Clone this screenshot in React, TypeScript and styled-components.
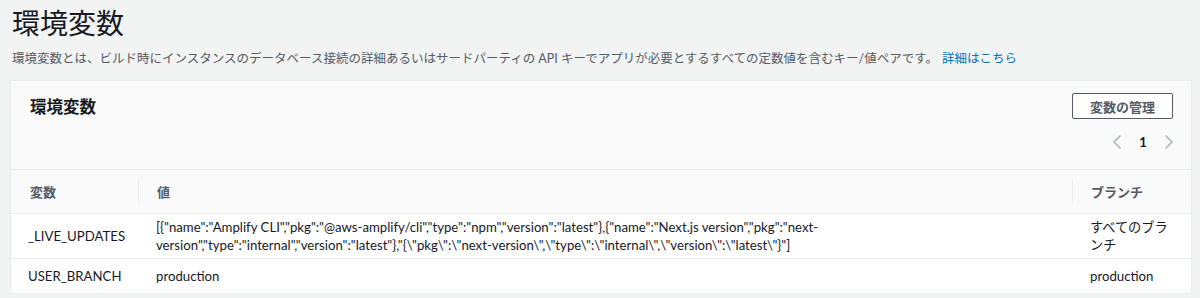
import React from "react";
import styled, { createGlobalStyle } from "styled-components";

const Global = createGlobalStyle`
  html, body { margin: 0; padding: 0; background: #f2f3f3; }
  body {
    font-family: "Lato", "Noto Sans CJK JP", sans-serif;
    color: #16191f;
    -webkit-font-smoothing: antialiased;
  }
`;

const Page = styled.div`
  padding: 5px 9px 0 11px;
`;

const Title = styled.h1`
  margin: 0 0 0 1px;
  font-size: 28px;
  font-weight: 400;
  line-height: 34px;
  color: #16191f;
  font-family: "Noto Sans CJK JP", sans-serif;
`;

const Description = styled.p`
  margin: 11px 0 0 1px;
  font-size: 12.5px;
  line-height: 18px;
  color: #545b64;
  font-family: "Lato", "Noto Sans CJK JP", sans-serif;
`;

const Link = styled.a`
  color: #0073bb;
  text-decoration: none;
  margin-left: 4px;
`;

const Card = styled.section`
  margin-top: 13px;
  background: #fafafa;
  box-shadow: 0 0 0 1px #eaeded, 0 1px 1px rgba(0, 28, 36, 0.15);
`;

const CardHeader = styled.div`
  display: flex;
  justify-content: space-between;
  align-items: flex-start;
  padding: 12px 18px 0 19px;
  height: 76px;
  border-bottom: 1px solid #eaeded;
`;

const CardTitle = styled.h2`
  margin: 1px 0 0 0;
  font-size: 16.5px;
  font-weight: 700;
  line-height: 24px;
  font-family: "Noto Sans CJK JP", sans-serif;
  color: #16191f;
`;

const Actions = styled.div`
  display: flex;
  flex-direction: column;
  align-items: flex-end;
`;

const Button = styled.button`
  width: 101px;
  height: 26px;
  border: 1px solid #545b64;
  border-radius: 2px;
  background: #fff;
  color: #545b64;
  font-family: "Noto Sans CJK JP", sans-serif;
  font-weight: 700;
  font-size: 13px;
  padding: 0;
  cursor: pointer;
`;

const Pager = styled.div`
  display: flex;
  align-items: center;
  gap: 13px;
  margin-top: 15px;
  margin-right: -3px;
`;

const PageNum = styled.span`
  font-size: 13px;
  font-weight: 700;
  color: #16191f;
  width: 12px;
  text-align: center;
`;

const Chevron = ({ dir }: { dir: "left" | "right" }) => (
  <svg width="14" height="16" viewBox="0 0 14 16" fill="none">
    <path
      d={dir === "left" ? "M10 2 L4 8 L10 14" : "M4 2 L10 8 L4 14"}
      stroke="#aab7b8"
      strokeWidth="1.6"
      strokeLinecap="round"
      strokeLinejoin="round"
    />
  </svg>
);

const Table = styled.table`
  width: 100%;
  border-collapse: collapse;
  table-layout: fixed;
`;

const Th = styled.th<{ $sep?: boolean }>`
  position: relative;
  height: 43px;
  padding: 0 0 0 19px;
  text-align: left;
  font-size: 13px;
  font-weight: 700;
  color: #545b64;
  font-family: "Noto Sans CJK JP", sans-serif;
  border-bottom: 1px solid #eaeded;
  &::before {
    content: "";
    display: ${(p) => (p.$sep ? "block" : "none")};
    position: absolute;
    left: 0;
    top: 10px;
    bottom: 10px;
    width: 1px;
    background: #eaeded;
  }
`;

const Tr = styled.tr<{ $h: number }>`
  height: ${(p) => p.$h}px;
  background: #fff;
`;

const Td = styled.td`
  padding: 3px 12px 3px 18px;
  font-size: 13.2px;
  line-height: 18px;
  color: #16191f;
  font-family: "Lato", "Noto Sans CJK JP", sans-serif;
  border-bottom: 1px solid #eaeded;
  vertical-align: middle;
  word-break: normal;
`;

const NameTd = styled(Td)`
  padding-left: 17px;
`;

const BranchTd = styled(Td)`
  padding-left: 18px;
  padding-right: 14px;
  line-break: strict;
`;

const liveValue =
  '[{"name":"Amplify CLI","pkg":"@aws-amplify/cli","type":"npm","version":"latest"},{"name":"Next.js version","pkg":"next-version","type":"internal","version":"latest"},"{\\"pkg\\":\\"next-version\\",\\"type\\":\\"internal\\",\\"version\\":\\"latest\\"}"]';

const rows = [
  { name: "_LIVE_UPDATES", value: liveValue, branch: "すべてのブランチ", h: 45 },
  { name: "USER_BRANCH", value: "production", branch: "production", h: 35 },
];

export default function App() {
  return (
    <Page>
      <Global />
      <Title>環境変数</Title>
      <Description>
        環境変数とは、ビルド時にインスタンスのデータベース接続の詳細あるいはサードパーティの API キーでアプリが必要とするすべての定数値を含むキー/値ペアです。
        <Link href="#">詳細はこちら</Link>
      </Description>
      <Card>
        <CardHeader>
          <CardTitle>環境変数</CardTitle>
          <Actions>
            <Button>変数の管理</Button>
            <Pager>
              <Chevron dir="left" />
              <PageNum>1</PageNum>
              <Chevron dir="right" />
            </Pager>
          </Actions>
        </CardHeader>
        <Table>
          <colgroup>
            <col style={{ width: 127 }} />
            <col style={{ width: 934 }} />
            <col style={{ width: 119 }} />
          </colgroup>
          <thead>
            <tr>
              <Th>変数</Th>
              <Th $sep>値</Th>
              <Th $sep>ブランチ</Th>
            </tr>
          </thead>
          <tbody>
            {rows.map((r) => (
              <Tr key={r.name} $h={r.h}>
                <NameTd>{r.name}</NameTd>
                <Td>{r.value}</Td>
                <BranchTd>{r.branch}</BranchTd>
              </Tr>
            ))}
          </tbody>
        </Table>
      </Card>
    </Page>
  );
}
